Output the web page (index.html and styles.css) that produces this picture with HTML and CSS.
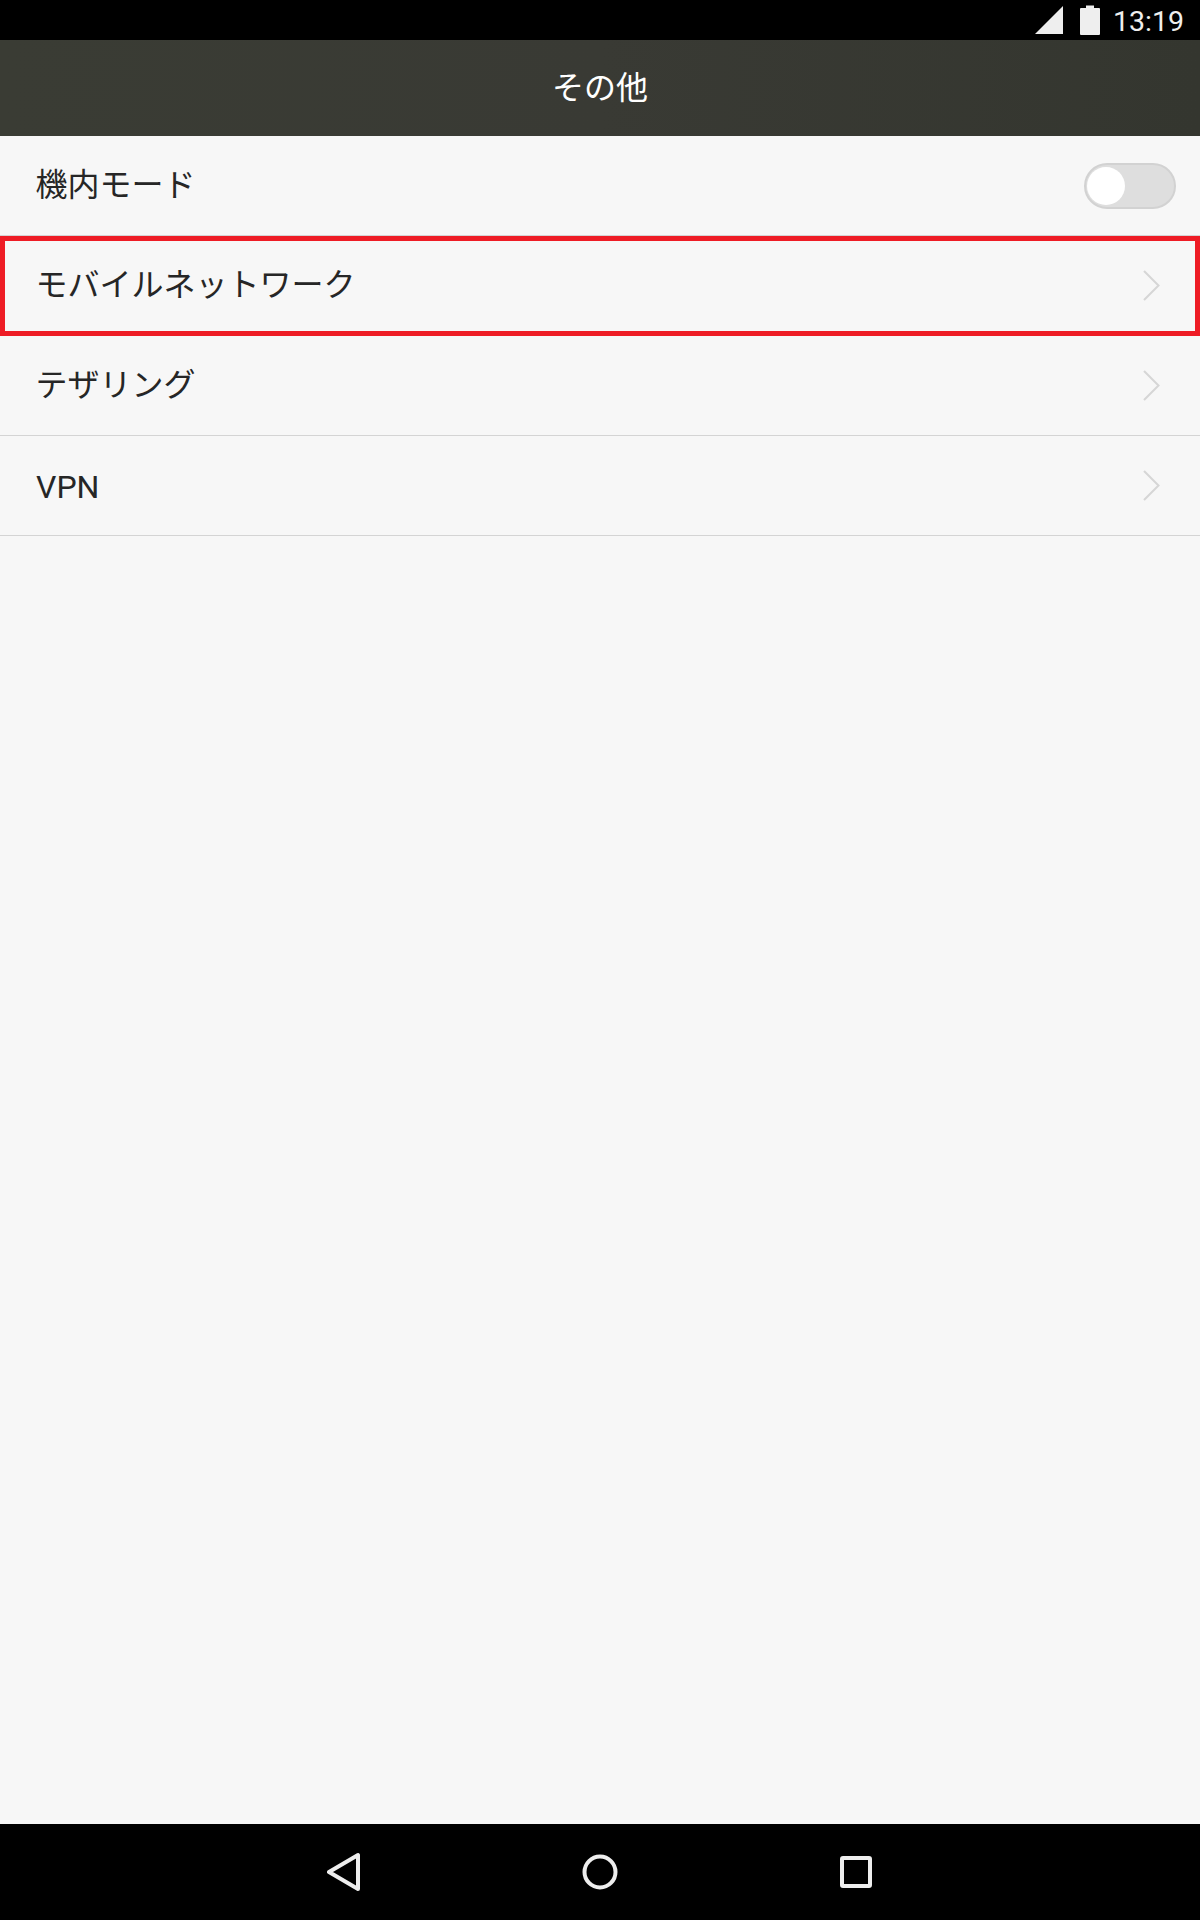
FILE: index.html
```html
<!DOCTYPE html>
<html lang="ja">
<head>
  <meta charset="UTF-8" />
  <meta name="viewport" content="width=device-width, initial-scale=1.0"/>
  <title>その他</title>
  <link rel="stylesheet" href="styles.css">
</head>
<body>

  <div class="status-bar">
    <svg class="signal" width="30" height="30" viewBox="0 0 30 30">
      <polygon points="29,1 29,29 1,29" fill="#eeeeee"/>
    </svg>
    <svg class="battery" width="20" height="30" viewBox="0 0 20 30">
      <path d="M6 0.5h8v2.5h5a1 1 0 0 1 1 1v25a1 1 0 0 1-1 1h-18a1 1 0 0 1-1-1v-25a1 1 0 0 1 1-1h5z" fill="#eeeeee"/>
    </svg>
    <span class="clock">13:19</span>
  </div>

  <div class="title-bar">その他</div>

  <!-- Settings list -->
  <div class="list">
    <div class="row">
      <span class="label">機内モード</span>
      <span class="switch"><span class="knob"></span></span>
    </div>
    <div class="row">
      <span class="label">モバイルネットワーク</span>
      <svg class="chevron" width="17" height="31" viewBox="0 0 17 31">
        <polyline points="1,1 15.5,15.5 1,30" fill="none" stroke="#d6d6d6" stroke-width="2"/>
      </svg>
      <div class="highlight"></div>
    </div>
    <div class="row">
      <span class="label">テザリング</span>
      <svg class="chevron" width="17" height="31" viewBox="0 0 17 31">
        <polyline points="1,1 15.5,15.5 1,30" fill="none" stroke="#d6d6d6" stroke-width="2"/>
      </svg>
    </div>
    <div class="row">
      <span class="latin">VPN</span>
      <svg class="chevron" width="17" height="31" viewBox="0 0 17 31">
        <polyline points="1,1 15.5,15.5 1,30" fill="none" stroke="#d6d6d6" stroke-width="2"/>
      </svg>
    </div>
  </div>

  <div class="nav-bar">
    <svg width="34" height="40" viewBox="0 0 34 40">
      <polygon points="2,20 31,3 31,37" fill="none" stroke="#eeeeee" stroke-width="4" stroke-linejoin="round"/>
    </svg>
    <svg width="36" height="36" viewBox="0 0 36 36">
      <circle cx="18" cy="18" r="15.5" fill="none" stroke="#eeeeee" stroke-width="4"/>
    </svg>
    <svg width="34" height="34" viewBox="0 0 34 34">
      <rect x="3" y="3" width="28" height="28" rx="1" fill="none" stroke="#eeeeee" stroke-width="4" stroke-linejoin="round"/>
    </svg>
  </div>

</body>
</html>
```

FILE: styles.css
```css
html, body {
  height: 100%;
}

body {
  margin: 0;
  height: 1920px;
  overflow: hidden;
  display: flex;
  flex-direction: column;
  background: #f7f7f7;
  font-family: "Noto Sans CJK JP", "Noto Sans", sans-serif;
  color: #262626;
}

.status-bar {
  height: 40px;
  flex: none;
  background: #000;
  display: flex;
  align-items: center;
  justify-content: flex-end;
  padding-right: 16px;
  box-sizing: border-box;
}

.signal {
  margin-right: 16px;
}

.battery {
  margin-right: 13px;
}

.clock {
  font-family: Roboto, sans-serif;
  font-size: 28.5px;
  color: #eeeeee;
  padding-top: 2px;
}

.title-bar {
  height: 96px;
  flex: none;
  box-sizing: border-box;
  padding-bottom: 7px;
  background: linear-gradient(90deg, #3a3c34 0%, #393a34 50%, #34362f 100%);
  color: #fff;
  font-size: 32px;
  display: flex;
  align-items: center;
  justify-content: center;
}

.list {
  flex: 1;
}

.row {
  position: relative;
  height: 100px;
  box-sizing: border-box;
  border-bottom: 1px solid #d4d4d4;
  padding: 0 24px 0 36px;
  display: flex;
  align-items: center;
  justify-content: space-between;
  font-size: 32px;
}

.label {
  padding-bottom: 7px;
  margin-left: -0.5px;
}

.latin {
  font-family: Roboto, sans-serif;
  padding-top: 2px;
}

.chevron {
  margin-right: 16px;
}

.switch {
  width: 92px;
  height: 46px;
  box-sizing: border-box;
  border: 2px solid #d2d2d2;
  border-radius: 23px;
  background: #dedede;
  display: flex;
  align-items: center;
  padding-left: 1px;
}

.knob {
  width: 38px;
  height: 38px;
  border-radius: 50%;
  background: #fff;
}

/* red frame marking the row */
.highlight {
  position: absolute;
  left: 0;
  right: 0;
  top: 0;
  bottom: -1px;
  border: 5px solid #ee1c25;
  box-sizing: border-box;
}

.nav-bar {
  height: 96px;
  flex: none;
  background: #000;
  display: flex;
  align-items: center;
  justify-content: center;
  gap: 221px;
}
```
